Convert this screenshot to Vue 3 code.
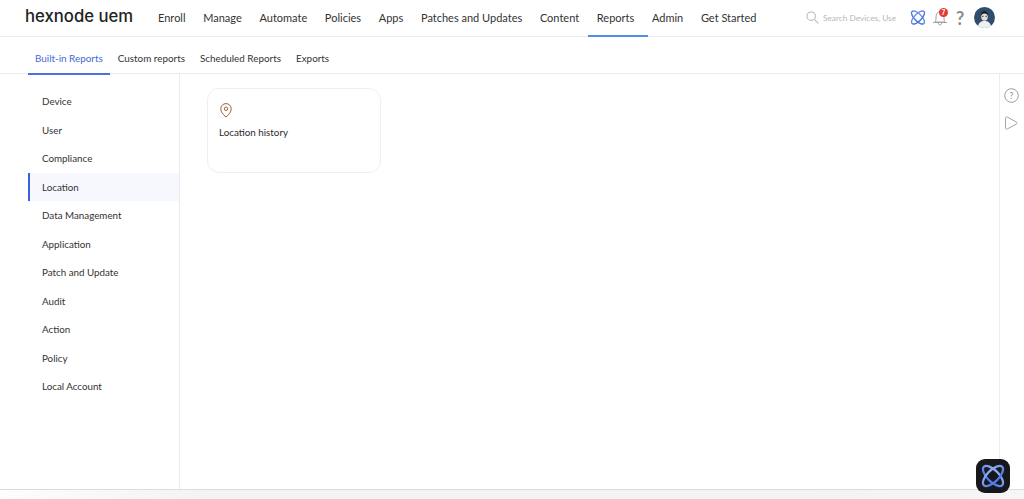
<template>
  <div class="page">
    <header class="topbar">
      <div class="logo">hexnode uem</div>
      <nav class="mainnav">
        <a v-for="item in navItems" :key="item" class="navlink" :class="{ active: item === 'Reports' }">{{ item }}</a>
      </nav>
      <div class="tools">
        <div class="search">
          <svg width="13" height="13" viewBox="0 0 13 13" fill="none" stroke="#b9b9b9" stroke-width="1.1">
            <circle cx="5.2" cy="5.2" r="4.2" />
            <path d="M8.3 8.3l4 4" />
          </svg>
          <span>Search Devices, Use</span>
        </div>
        <svg class="atom" width="16" height="17" viewBox="0 0 16 17" fill="none" stroke-width="1.4">
          <defs>
            <linearGradient id="atomStroke" gradientUnits="userSpaceOnUse" x1="0" y1="0" x2="0" y2="17">
              <stop offset="0" stop-color="#8aa9ec" />
              <stop offset="1" stop-color="#2458d6" />
            </linearGradient>
          </defs>
          <ellipse cx="8" cy="8.500" rx="8.500" ry="3.600" transform="rotate(45 8 8.500)" stroke="url(#atomStroke)" />
          <ellipse cx="8" cy="8.500" rx="8.500" ry="3.600" transform="rotate(-45 8 8.500)" stroke="url(#atomStroke)" />
        </svg>
        <div class="bell">
          <svg width="16" height="18" viewBox="0 0 16 18" fill="none" stroke="#a3a3a3" stroke-width="1">
            <path d="M3 13c.8-1 1-2 1-5 0-3 1.600-5.500 4-5.500s4 2.500 4 5.500c0 3 .2 4 1 5z" />
            <path d="M1 13.500h14M6.300 14c0 2.600 3.400 2.600 3.400 0" />
          </svg>
          <span class="badge">7</span>
        </div>
        <span class="help">?</span>
        <svg class="avatar" width="21" height="21" viewBox="0 0 21 21">
          <circle cx="10.500" cy="10.500" r="10.500" fill="#2f4d6b" />
          <path d="M4 19c1-4 3.500-5 6.500-5s5.500 1 6.500 5c-1.800 1.300-4 2-6.500 2s-4.700-.7-6.500-2z" fill="#eef0f2" />
          <ellipse cx="10.500" cy="9.500" rx="3.300" ry="4.200" fill="#e9dcd4" />
          <path d="M7 9c-.4-3.500 1.500-5 3.500-5s3.900 1.500 3.500 5c-.5-1.800-1.500-2.600-3.500-2.600S7.500 7.200 7 9z" fill="#17202b" />
          <path d="M8 9.300h1.600M11.400 9.300H13" stroke="#17202b" stroke-width=".8" />
        </svg>
      </div>
    </header>

    <div class="subbar">
      <a v-for="tab in tabs" :key="tab" class="tab" :class="{ active: tab === 'Built-in Reports' }">{{ tab }}</a>
    </div>

    <div class="body">
      <aside class="sidebar">
        <a v-for="item in sideItems" :key="item" class="sideitem" :class="{ active: item === 'Location' }">{{ item }}</a>
      </aside>
      <main class="content">
        <div class="card">
          <svg width="14" height="16" viewBox="0 0 14 16" fill="none" stroke="#a0623a" stroke-width="1">
            <path d="M7 15C4 12.500 1.800 10 1.800 6.800a5.200 5.200 0 0 1 10.400 0C12.200 10 10 12.500 7 15z" />
            <circle cx="7" cy="6.800" r="1.700" />
          </svg>
          <div class="cardtitle">Location history</div>
        </div>
      </main>
      <aside class="rail">
        <svg width="15" height="15" viewBox="0 0 15 15" fill="none" stroke="#9c9c9c" stroke-width="1">
          <circle cx="7.500" cy="7.500" r="6.800" />
          <text x="7.500" y="10.500" text-anchor="middle" font-size="8.500" fill="#8a8a8a" stroke="none" font-family="Lato">?</text>
        </svg>
        <svg width="14" height="14" viewBox="0 0 14 14" fill="none" stroke="#a3a3a3" stroke-width="1">
          <path d="M1.500 2.200c0-1.200.9-1.700 1.900-1.100l8.900 4.900c1 .6 1 1.500 0 2.100l-8.900 4.800c-1 .6-1.900.1-1.900-1.100z" />
        </svg>
      </aside>
    </div>
    <div class="strip"></div>

    <div class="assistant">
      <svg width="26" height="26" viewBox="0 0 26 26" fill="none" stroke-width="2.200">
        <defs>
          <linearGradient id="assistantStroke" gradientUnits="userSpaceOnUse" x1="0" y1="2" x2="0" y2="24">
            <stop offset="0" stop-color="#a9c0f4" />
            <stop offset="1" stop-color="#2f62e6" />
          </linearGradient>
        </defs>
        <ellipse cx="13" cy="13" rx="13" ry="5.800" transform="rotate(45 13 13)" stroke="url(#assistantStroke)" />
        <ellipse cx="13" cy="13" rx="13" ry="5.800" transform="rotate(-45 13 13)" stroke="url(#assistantStroke)" />
      </svg>
    </div>
  </div>
</template>

<script setup>
const navItems = ['Enroll', 'Manage', 'Automate', 'Policies', 'Apps', 'Patches and Updates', 'Content', 'Reports', 'Admin', 'Get Started']
const tabs = ['Built-in Reports', 'Custom reports', 'Scheduled Reports', 'Exports']
const sideItems = ['Device', 'User', 'Compliance', 'Location', 'Data Management', 'Application', 'Patch and Update', 'Audit', 'Action', 'Policy', 'Local Account']
</script>

<style scoped>
.page {
  width: 1024px;
  height: 499px;
  overflow: hidden;
  position: relative;
  display: flex;
  flex-direction: column;
  background: #fff;
  color: #2b2b2b;
  font-family: Lato, "Liberation Sans", sans-serif;
}

.topbar {
  height: 37px;
  flex: none;
  display: flex;
  align-items: stretch;
  border-bottom: 1px solid #ececec;
  box-sizing: border-box;
  padding-left: 25px;
}

.logo {
  width: 124.200px;
  flex: none;
  font-family: Inter, sans-serif;
  font-weight: 500;
  font-size: 16.700px;
  line-height: 32px;
  color: #222;
}

.mainnav {
  display: flex;
  width: 620.300px;
  flex: none;
}

.navlink {
  padding: 0 8.830px;
  font-size: 11px;
  line-height: 35px;
  height: 37px;
  box-sizing: border-box;
  color: #333;
  white-space: nowrap;
}

.navlink.active {
  border-bottom: 2px solid #4f8fe8;
  padding-right: 13.300px;
  margin-right: -4.470px;
}

.tools {
  display: flex;
  align-items: center;
  height: 35px;
}

.search {
  display: flex;
  align-items: center;
  gap: 4px;
  margin-left: 36.500px;
  width: 104px;
  flex: none;
  font-size: 8.300px;
  color: #b8b8b8;
  white-space: nowrap;
}

.atom {
  flex: none;
}

.bell {
  position: relative;
  display: flex;
  margin-left: 6px;
}

.badge {
  position: absolute;
  top: -1px;
  left: 7px;
  width: 9px;
  height: 9px;
  border-radius: 50%;
  background: #e53935;
  color: #fff;
  font-size: 6.500px;
  line-height: 9px;
  font-weight: 700;
  text-align: center;
}

.help {
  margin-left: 8px;
  font-size: 18px;
  font-weight: 700;
  color: #8c8c8c;
  width: 10px;
}

.avatar {
  margin-left: 8.500px;
  flex: none;
}

.subbar {
  height: 37px;
  flex: none;
  display: flex;
  align-items: stretch;
  padding-left: 27.500px;
  border-bottom: 1px solid #ececec;
  box-sizing: border-box;
}

.tab {
  padding: 0 7.500px;
  font-size: 9.900px;
  line-height: 43px;
  height: 37px;
  box-sizing: border-box;
  color: #333;
  white-space: nowrap;
}

.tab.active {
  color: #3f68d8;
  border-bottom: 2px solid #4a72dc;
  margin-bottom: -1px;
  height: 38px;
}

.body {
  flex: 1;
  display: flex;
  min-height: 0;
}

.sidebar {
  width: 180px;
  flex: none;
  box-sizing: border-box;
  border-right: 1px solid #ececec;
  padding: 13px 0 0 28px;
  display: flex;
  flex-direction: column;
}

.sideitem {
  height: 28.500px;
  line-height: 28px;
  padding-left: 14px;
  font-size: 9.800px;
  color: #333;
}

.sideitem.active {
  background: #f7f8fe;
  box-shadow: inset 2px 0 0 #3a62dc;
}

.content {
  flex: 1;
  padding: 14px 0 0 27px;
}

.card {
  width: 174px;
  height: 85px;
  box-sizing: border-box;
  border: 1px solid #efefef;
  border-radius: 12px;
  padding: 13px 11px;
}

.card svg {
  display: block;
}

.cardtitle {
  margin-top: 7px;
  font-size: 9.800px;
  line-height: 14px;
  color: #2b2b2b;
}

.rail {
  width: 25px;
  flex: none;
  box-sizing: border-box;
  border-left: 1px solid #ececec;
  padding: 14px 0 0 4px;
  display: flex;
  flex-direction: column;
  gap: 13px;
}

.strip {
  height: 10px;
  flex: none;
  border-top: 1px solid #dcdcdc;
  box-sizing: border-box;
  background: linear-gradient(90deg, #fdfdfd, #f3f3f3 20%, #f3f3f3 80%, #f6f6f6);
}

.assistant {
  position: absolute;
  left: 976px;
  top: 459px;
  width: 34px;
  height: 34px;
  border-radius: 9px;
  background: #17181b;
  display: flex;
  align-items: center;
  justify-content: center;
}
</style>

<style>
html, body {
  margin: 0;
  overflow: hidden;
}
</style>
